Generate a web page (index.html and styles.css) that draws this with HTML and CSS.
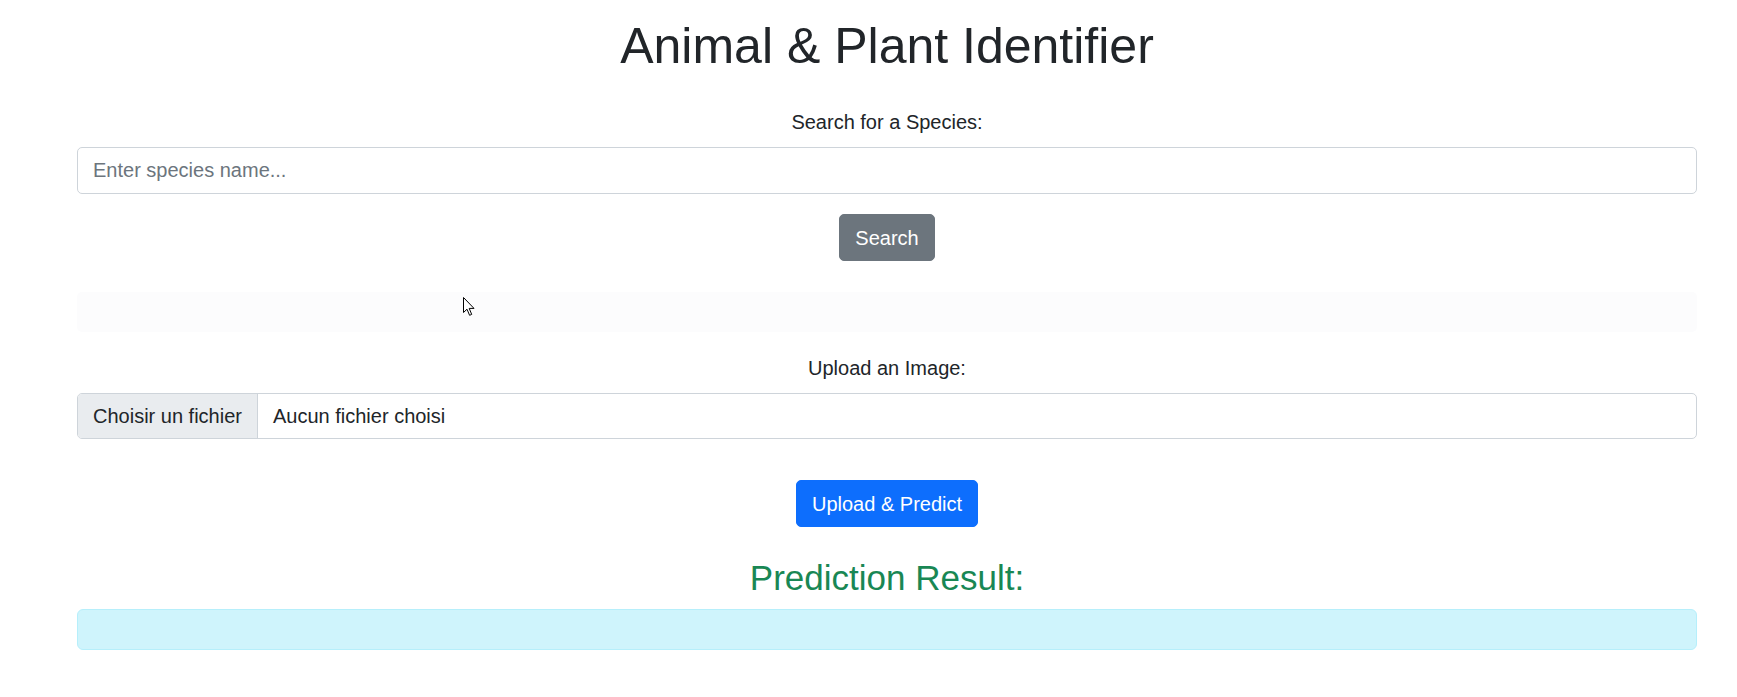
FILE: index.html
```html
<!DOCTYPE html>
<html lang="en">
<head>
<meta charset="utf-8">
<title>Animal &amp; Plant Identifier</title>
<link rel="stylesheet" href="styles.css">
</head>
<body>
<main class="container">
  <h1 class="title">Animal &amp; Plant Identifier</h1>

  <section class="group">
    <label class="field-label" for="species">Search for a Species:</label>
    <input class="form-control" id="species" type="text" placeholder="Enter species name...">
    <div class="actions">
      <button class="btn btn-secondary" type="button">Search</button>
    </div>
  </section>

  <div class="search-results"></div>

  <section class="group upload-group">
    <span class="field-label">Upload an Image:</span>
    <label class="file-input">
      <span class="file-btn">Choisir un fichier</span>
      <span class="file-name">Aucun fichier choisi</span>
    </label>
    <div class="actions actions-upload">
      <button class="btn btn-primary" type="button">Upload &amp; Predict</button>
    </div>
  </section>

  <h3 class="result-title">Prediction Result:</h3>
  <div class="alert-info"></div>
</main>
<svg class="cursor" width="13" height="20" viewBox="0 0 13 20" aria-hidden="true">
  <path d="M0.5 0.5 L0.5 15.5 L4 12.2 L6.6 18.3 L8.7 17.4 L6.2 11.4 L11 11.4 Z" fill="#ffffff" stroke="#000000" stroke-width="1" stroke-linejoin="miter"/>
</svg>
</body>
</html>
```

FILE: styles.css
```css
* { box-sizing: border-box; }

html, body {
  margin: 0;
  padding: 0;
  background: #ffffff;
}

body {
  font-family: "Liberation Sans", Arial, sans-serif;
  font-size: 20px;
  line-height: 1.5;
  color: #212529;
}

.container {
  width: 1620px;
  margin-left: 77px;
  padding-top: 16px;
  display: flex;
  flex-direction: column;
}

.title {
  margin: 0;
  font-size: 50px;
  font-weight: 400;
  line-height: 60px;
  text-align: center;
  color: #212529;
}

.group {
  display: flex;
  flex-direction: column;
}

.field-label {
  display: block;
  text-align: center;
  margin-top: 31px;
  margin-bottom: 10px;
  line-height: 30px;
}

.upload-group .field-label {
  margin-top: 21px;
}

.form-control {
  display: block;
  width: 100%;
  height: 47px;
  padding: 7px 15px;
  font-family: inherit;
  font-size: 20px;
  line-height: 30px;
  color: #212529;
  background: #ffffff;
  border: 1px solid #ced4da;
  border-radius: 5px;
  outline: none;
}

.form-control::placeholder {
  color: #6c757d;
  opacity: 1;
}

.actions {
  display: flex;
  justify-content: center;
  margin-top: 20px;
}

.actions-upload {
  margin-top: 41px;
}

.btn {
  font-family: inherit;
  font-size: 20px;
  line-height: 30px;
  height: 47px;
  padding: 7px 15px;
  border: 1px solid transparent;
  border-radius: 5px;
  color: #ffffff;
  cursor: pointer;
}

.btn-secondary {
  background: #6c757d;
  border-color: #6c757d;
}

.btn-primary {
  background: #0d6efd;
  border-color: #0d6efd;
}

.search-results {
  margin-top: 31px;
  height: 40px;
  background: #fcfcfd;
  border-radius: 5px;
}

.file-input {
  display: flex;
  height: 46px;
  border: 1px solid #ced4da;
  border-radius: 5px;
  overflow: hidden;
  background: #ffffff;
}

.file-btn {
  display: flex;
  align-items: center;
  padding: 0 15px;
  background: #e9ecef;
  border-right: 1px solid #ced4da;
  color: #212529;
  white-space: nowrap;
}

.file-name {
  display: flex;
  align-items: center;
  padding: 0 15px;
  color: #212529;
}

.result-title {
  margin: 30px 0 10px;
  font-size: 35px;
  font-weight: 400;
  line-height: 42px;
  text-align: center;
  color: #198754;
}

.alert-info {
  height: 41px;
  background: #cff4fc;
  border: 1px solid #b6effb;
  border-radius: 6px;
}

.cursor {
  position: absolute;
  left: 463px;
  top: 297px;
  pointer-events: none;
}
```
